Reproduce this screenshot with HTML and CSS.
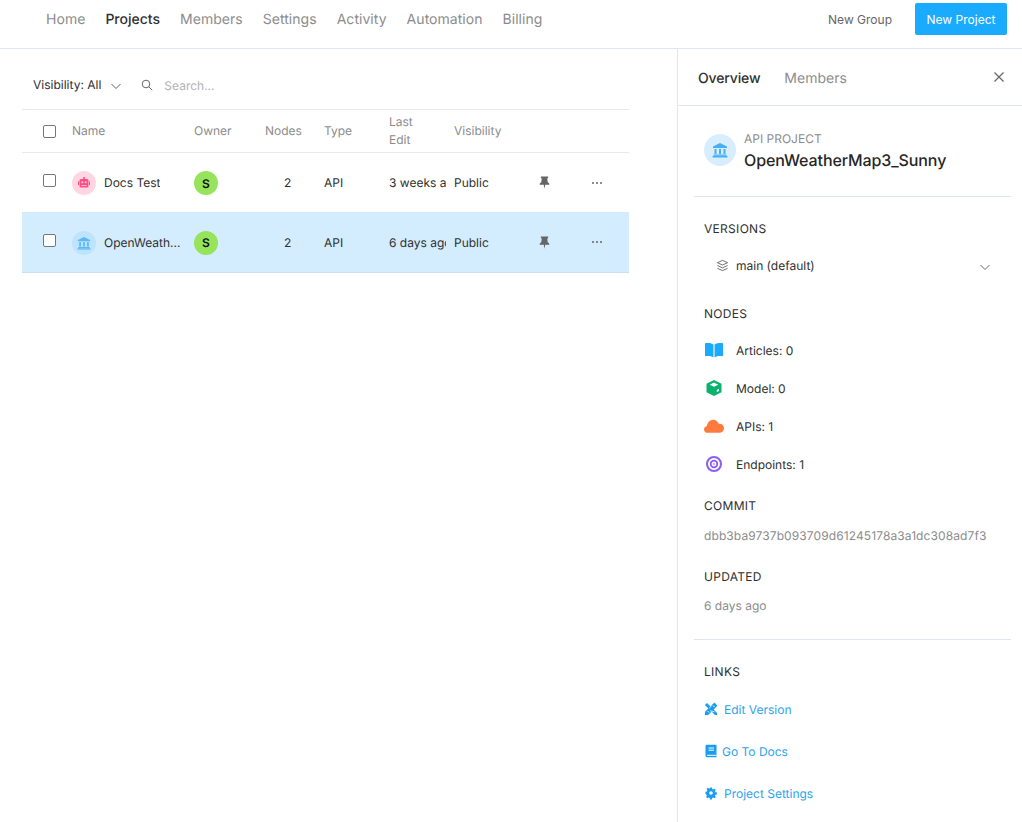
FILE: index.html
```html
<!DOCTYPE html>
<html lang="en">
<head>
<meta charset="utf-8">
<title>Projects</title>
<link rel="stylesheet" href="styles.css">
</head>
<body>
<svg class="defs" width="0" height="0" aria-hidden="true">
  <symbol id="bank" viewBox="0 0 16 16"><path d="M8 1 15 4.600V6H1V4.600Z"/><rect x="2.500" y="7" width="2" height="5"/><rect x="7" y="7" width="2" height="5"/><rect x="11.500" y="7" width="2" height="5"/><rect x="1.500" y="12.500" width="13" height="1.300"/><rect x=".5" y="14" width="15" height="1.500"/></symbol>
  <symbol id="pin" viewBox="0 0 12 14"><path d="M2 .5h8v1.500L9 2.600 9.500 6.600C10.800 7.300 11.300 8.200 11.300 9.400H6.800L6 13.700 5.200 9.400H.7C.7 8.200 1.200 7.300 2.500 6.600L3 2.600 2 2Z"/></symbol>
  <symbol id="dots" viewBox="0 0 12 4"><circle cx="2" cy="2" r="1"/><circle cx="6" cy="2" r="1"/><circle cx="10" cy="2" r="1"/></symbol>
  <symbol id="chev" viewBox="0 0 12 12"><path d="M1.500 4 6 8.500 10.500 4" fill="none" stroke="currentColor"/></symbol>
</svg>

<header class="topbar">
  <nav class="nav">
    <a>Home</a>
    <a class="active">Projects</a>
    <a>Members</a>
    <a>Settings</a>
    <a>Activity</a>
    <a>Automation</a>
    <a>Billing</a>
  </nav>
  <div class="actions">
    <button class="btn-plain">New Group</button>
    <button class="btn-primary">New Project</button>
  </div>
</header>

<div class="layout">
  <main class="content">
    <div class="filters">
      <span class="filter">Visibility: All</span>
      <svg class="filter-chev"><use href="#chev"/></svg>
      <svg class="search-icon" viewBox="0 0 12 12"><circle cx="5" cy="5" r="3.800" fill="none" stroke="currentColor"/><path d="M8 8l3.200 3.200" stroke="currentColor" fill="none"/></svg>
      <span class="search">Search...</span>
    </div>

    <div class="table">
      <div class="row head">
        <div class="cell"><span class="check head-check"></span></div>
        <div class="cell">Name</div>
        <div class="cell">Owner</div>
        <div class="cell nodes-head">Nodes</div>
        <div class="cell">Type</div>
        <div class="cell"><span class="wrap">Last Edit</span></div>
        <div class="cell">Visibility</div>
        <div class="cell"></div>
        <div class="cell"></div>
      </div>
      <div class="row body first">
        <div class="cell"><span class="check"></span></div>
        <div class="cell name"><span class="avatar pink"><svg class="robot" viewBox="0 0 14 14"><rect x="6.200" y="1" width="1.600" height="2"/><rect x="2.500" y="3" width="9" height="8.500" rx="1.500"/><rect x="1" y="5.500" width="1" height="3.500"/><rect x="12" y="5.500" width="1" height="3.500"/><circle cx="5.300" cy="6.200" r="1" fill="#ffd6e2"/><circle cx="8.700" cy="6.200" r="1" fill="#ffd6e2"/><rect x="4.500" y="9" width="5" height=".8" fill="#ffd6e2"/></svg></span><span class="clip">Docs Test</span></div>
        <div class="cell"><span class="owner">S</span></div>
        <div class="cell nodes">2</div>
        <div class="cell">API</div>
        <div class="cell"><span class="edit">3 weeks ago</span></div>
        <div class="cell">Public</div>
        <div class="cell"><svg class="pin"><use href="#pin"/></svg></div>
        <div class="cell"><svg class="dots"><use href="#dots"/></svg></div>
      </div>
      <div class="row body selected">
        <div class="cell"><span class="check"></span></div>
        <div class="cell name"><span class="avatar blue"><svg class="bank-sm"><use href="#bank"/></svg></span><span class="clip">OpenWeath...</span></div>
        <div class="cell"><span class="owner">S</span></div>
        <div class="cell nodes">2</div>
        <div class="cell">API</div>
        <div class="cell"><span class="edit">6 days ago</span></div>
        <div class="cell">Public</div>
        <div class="cell"><svg class="pin"><use href="#pin"/></svg></div>
        <div class="cell"><svg class="dots"><use href="#dots"/></svg></div>
      </div>
    </div>
  </main>

  <aside class="panel">
    <div class="tabs">
      <a class="tab active">Overview</a>
      <a class="tab">Members</a>
      <svg class="close" viewBox="0 0 12 12"><path d="M1.500 1.500l9 9M10.500 1.500l-9 9" stroke="currentColor" stroke-width="1.200" fill="none"/></svg>
    </div>

    <div class="project">
      <span class="avatar-lg"><svg class="bank-lg"><use href="#bank"/></svg></span>
      <div class="project-text">
        <div class="project-kind">API PROJECT</div>
        <div class="project-name">OpenWeatherMap3_Sunny</div>
      </div>
    </div>

    <section class="details">
      <h3 class="label">VERSIONS</h3>
      <div class="version">
        <svg class="layers" viewBox="0 0 14 14" fill="none" stroke="currentColor"><path d="M7 1.500 12.500 4 7 6.500 1.500 4Z"/><path d="M1.500 7 7 9.500 12.500 7"/><path d="M1.500 10 7 12.500 12.500 10"/></svg>
        <span class="version-name">main (default)</span>
        <svg class="version-chev"><use href="#chev"/></svg>
      </div>

      <h3 class="label nodes-label">NODES</h3>
      <ul class="node-list">
        <li><svg class="node-icon" viewBox="0 0 20 20"><path fill="#1aabff" d="M1 3.200C4 2.800 7.200 3.200 9.300 4.400V17.200C7.200 16 4 15.800 1 16.200Z"/><path fill="#1aabff" d="M19 3.200C16 2.800 12.800 3.200 10.700 4.400V17.200C12.800 16 16 15.800 19 16.200Z"/><rect x="9.300" y="4.400" width="1.400" height="12.800" fill="#8fd4ff"/></svg>Articles: 0</li>
        <li><svg class="node-icon" viewBox="0 0 20 20"><path fill="#0ab36c" d="M10 2 17.500 5.800V14.200L10 18 2.500 14.200V5.800Z"/><path fill="#fff" d="M10 4.600 14.300 6.700 10 8.800 5.700 6.700Z"/><path fill="#fff" d="M15 10.800V13L12.800 14.100V11.900Z"/></svg>Model: 0</li>
        <li><svg class="node-icon" viewBox="0 0 20 20"><path fill="#ff7a3d" d="M3.500 16.800C1.500 16.800 0 15.300 0 13.400 0 11.700 1.200 10.300 2.900 10 3.300 6.800 5.800 3.800 9.200 3.800c2.700 0 4.700 1.700 5.500 4 .2 0 .4-.1.700-.1 2.600 0 4.600 2 4.600 4.500 0 2.600-2 4.600-4.500 4.600Z"/></svg>APIs: 1</li>
        <li><svg class="node-icon" viewBox="0 0 20 20" fill="none"><circle cx="10" cy="10" r="7" stroke="#8b5cf6" stroke-width="2"/><circle cx="10" cy="10" r="3.300" stroke="#8b5cf6" stroke-width="1.800"/><circle cx="10" cy="10" r="1.200" fill="#c9b4fb"/></svg>Endpoints: 1</li>
      </ul>

      <h3 class="label commit-label">COMMIT</h3>
      <div class="muted hash">dbb3ba9737b093709d61245178a3a1dc308ad7f3</div>

      <h3 class="label updated-label">UPDATED</h3>
      <div class="muted last">6 days ago</div>
    </section>

    <section class="links">
      <h3 class="label">LINKS</h3>
      <a class="link"><svg class="link-icon" viewBox="0 0 14 14"><path d="M10.300.6 13.400 3.700 4.200 12.900 .8 13.200 1.100 9.800Z"/><path d="M.9 3 3 .9 13.100 11 13.200 13.200 11 13.100Z"/><path d="M9 3.500 10.500 5M3.500 9 5 10.500" stroke="#fff" stroke-width="1"/><path d="M5.200 6.200 7.800 3.600M6.200 8.800 10.400 9.800" stroke="#fff" stroke-width=".8"/></svg>Edit Version</a>
      <a class="link tight"><svg class="link-icon" viewBox="0 0 14 14"><path d="M3 .8H12.500V13.200H3C2 13.200 1.500 12.600 1.500 11.500V2.500C1.500 1.400 2 .8 3 .8Z"/><rect x="4.500" y="3.500" width="5.500" height="1" fill="#fff"/><rect x="4.500" y="5.700" width="5.500" height="1" fill="#fff"/><rect x="3" y="10.800" width="9.500" height="1" fill="#fff"/></svg>Go To Docs</a>
      <a class="link"><svg class="link-icon" viewBox="0 0 14 14"><path d="M5.900 1h2.200l.4 1.700 1.200.5 1.500-.9 1.500 1.500-.9 1.500.5 1.200 1.700.4v2.200l-1.700.4-.5 1.200.9 1.500-1.500 1.500-1.500-.9-1.200.5-.4 1.700H5.900l-.4-1.700-1.200-.5-1.500.9-1.500-1.500.9-1.500-.5-1.200L.5 8.100V5.900l1.700-.4.500-1.200-.9-1.500 1.500-1.500 1.500.9 1.200-.5Z" transform="translate(1 .7) scale(.85)"/><circle cx="7" cy="7" r="1.800" fill="#fff"/></svg>Project Settings</a>
    </section>
  </aside>
</div>
</body>
</html>
```
FILE: styles.css
```css
* { box-sizing: border-box; }
html, body { margin: 0; height: 100%; overflow: hidden; }
body { font-family: Inter, "Noto Sans", sans-serif; font-size: 12px; color: #303030; background: #fff; text-rendering: geometricPrecision; }
.defs { position: absolute; }

.topbar { height: 49px; padding: 3px 15px 13px 46px; display: flex; justify-content: space-between; align-items: center; border-bottom: 1px solid #dfe6f1; }
.nav { display: flex; gap: 20px; font-size: 14px; color: #8c8c8c; letter-spacing: .04px; }
.nav .active { color: #303030; font-weight: 500; letter-spacing: 0; }
.actions { display: flex; align-items: center; gap: 12px; }
.actions button { font: inherit; border: 0; height: 32px; border-radius: 2px; padding: 0 11px; }
.btn-plain { background: none; color: #666; }
.btn-primary { background: #1aabff; color: #fff; width: 92px; }

.layout { display: flex; height: calc(100% - 49px); }
.content { flex: 1; min-width: 0; padding: 0 48px 0 22px; }
.panel { width: 345px; border-left: 1px solid #dfe6f1; flex: none; }

.filters { height: 61px; display: flex; align-items: center; padding-left: 11px; border-bottom: 1px solid #e6e8ef; padding-top: 12px; }
.filter { color: #303030; margin-top: -1px; }
.filter-chev { width: 12px; height: 12px; margin-left: 9px; color: #666; margin-top: 2px; }
.search-icon { width: 12px; height: 12px; margin-left: 19px; color: #666; }
.search { margin-left: 11px; color: #b3b3b3; margin-top: 1px; }

.row { display: grid; grid-template-columns: 50px 122px 60px 70px 65px 65px 84px 53px 38px; }
.head { height: 43px; border-bottom: 1px solid #e6e8ef; color: #8c8c8c; padding-bottom: 1px; }
.body { height: 60px; }
.first { height: 59px; }
.selected { background: #d3edfe; border-bottom: 1px solid #c9e0f2; height: 61px; }
.cell { display: flex; align-items: center; min-width: 0; white-space: nowrap; }
.wrap { white-space: normal; line-height: 18px; width: 30px; }
.edit { width: 57px; overflow: hidden; }
.check { width: 13px; height: 13px; border: 1px solid #767676; border-radius: 2px; background: #fff; margin-left: 21px; margin-top: -4px; }
.head-check { margin-top: 1px; }
.nodes-head { padding-left: 11px; }
.nodes { padding-left: 30px; }
.name { gap: 8px; }
.clip { overflow: hidden; }
.avatar { width: 24px; height: 24px; border-radius: 50%; display: flex; align-items: center; justify-content: center; flex: none; margin-top: 1px; }
.pink { background: #ffd6e2; }
.blue { background: #bde3fd; }
.robot { width: 14px; height: 14px; fill: #ff4d85; }
.bank-sm { width: 14px; height: 14px; fill: #5bb8f5; }
.owner { width: 24px; height: 24px; border-radius: 50%; background: #96e35c; color: #111; font-weight: 600; display: flex; align-items: center; justify-content: center; margin-top: 1px; }
.pin { width: 11px; height: 13px; fill: #666; margin-left: 1px; }
.dots { width: 12px; height: 4px; fill: #666; }

.tabs { height: 57px; display: flex; align-items: center; padding: 2px 17px 0 20px; gap: 24px; border-bottom: 1px solid #dfe6f1; font-size: 14px; color: #8c8c8c; }
.tab.active { color: #303030; font-weight: 500; letter-spacing: -.15px; }
.close { width: 12px; height: 12px; margin-left: auto; color: #666; margin-top: -2px; }

.project { margin: 0 11px 0 16px; height: 91px; display: flex; align-items: center; gap: 8px; padding: 0 0 1px 10px; border-bottom: 1px solid #dfe6f1; }
.avatar-lg { width: 32px; height: 32px; border-radius: 50%; background: #d8eefe; display: flex; align-items: center; justify-content: center; margin-bottom: 2px; }
.bank-lg { width: 16px; height: 16px; fill: #49aef5; }
.project-kind { color: #8c8c8c; line-height: 16px; }
.project-name { font-size: 16px; font-weight: 500; color: #262626; line-height: 22px; margin-top: 2px; letter-spacing: -.1px; }

.details { padding: 0 0 0 10px; height: 443px; margin: 0 11px 0 16px; border-bottom: 1px solid #dfe6f1; }
.label { margin: 0; font-size: 12px; font-weight: 400; color: #303030; letter-spacing: .3px; line-height: 16px; }
.details > .label:first-child { padding-top: 24px; box-sizing: content-box; }
.version { display: flex; align-items: center; height: 32px; margin-top: 12px; padding-left: 12px; }
.layers { width: 13px; height: 13px; color: #666; }
.version-name { margin-left: 7px; }
.version-chev { width: 12px; height: 12px; margin-left: auto; margin-right: 20px; color: #666; margin-top: 3px; }
.nodes-label { margin-top: 25px; }
.node-list { list-style: none; margin: 9px 0 0; padding: 0; }
.node-list li { height: 38px; display: flex; align-items: center; gap: 12px; }
.node-icon { width: 20px; height: 20px; }
.commit-label { margin-top: 15px; }
.updated-label { margin-top: 25px; }
.muted { color: #8c8c8c; line-height: 16px; margin-top: 14px; }
.hash { letter-spacing: .1px; }
.muted.last { margin-top: 13px; }

.links { padding: 24px 0 0 26px; }
.link { display: flex; align-items: center; height: 42px; gap: 6px; color: #2ea3ec; }
.links .label { margin-bottom: 8px; }
.link-icon { width: 14px; height: 14px; fill: #1a9cf0; }
.link.tight { gap: 4px; }
```
